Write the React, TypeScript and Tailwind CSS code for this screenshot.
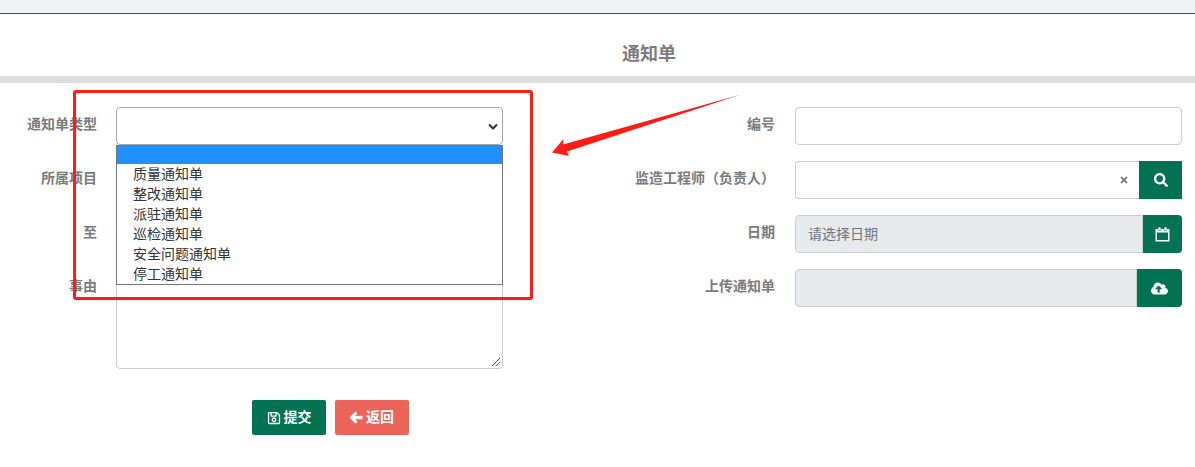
import React from 'react';
import { FaSearch, FaCloudUploadAlt, FaRegSave, FaTimes } from 'react-icons/fa';

const options = ['质量通知单', '整改通知单', '派驻通知单', '巡检通知单', '安全问题通知单', '停工通知单'];

const Label = ({ children, className = '' }: { children: React.ReactNode; className?: string }) => (
  <label className={`text-[14px] leading-[20px] font-bold text-[#7b7b7b] text-right shrink-0 pt-[7px] ${className}`}>{children}</label>
);

const inputCls = 'h-[38px] border border-[#ccc] rounded-[4px] bg-white flex-1 min-w-0';

const Row = ({ label, children, right }: { label: string; children: React.ReactNode; right?: boolean }) => (
  <div className="flex items-start">
    <Label className={right ? 'w-[251px]' : 'w-[97px]'}>{label}</Label>
    <div className={`flex flex-1 min-w-0 ${right ? 'ml-[20px]' : 'ml-[19px]'}`}>{children}</div>
  </div>
);

const CalendarIcon = () => (
  <svg width="15" height="15" viewBox="0 0 15 15" fill="none">
    <path d="M0.5 2H14.5V14.5H0.5Z M2 5.5V13H13V5.5Z" fill="white" fillRule="evenodd" />
    <rect x="3" y="0" width="3" height="3.5" rx="1" fill="white" stroke="#027352" strokeWidth="0.6" />
    <rect x="9" y="0" width="3" height="3.5" rx="1" fill="white" stroke="#027352" strokeWidth="0.6" />
  </svg>
);

const BackIcon = () => (
  <svg width="13" height="13" viewBox="0 0 13 13" fill="none">
    <path d="M6.5 1.5L1.5 6.5L6.5 11.5" stroke="white" strokeWidth="3" strokeLinejoin="miter" />
    <path d="M2.5 6.5H12.5" stroke="white" strokeWidth="3.4" />
  </svg>
);

export default function App() {
  return (
    <div className="relative w-[1195px] h-[467px] overflow-hidden bg-white font-['Liberation_Sans','Noto_Sans_CJK_SC',sans-serif]">
      <div className="h-[14px] bg-[#f0f3f4] border-b border-[#1f5f4c]" />

      <h1 className="h-[62px] pl-[103px] pt-[26px] text-center text-[18px] leading-[28px] font-bold text-[#7b7b7b]">通知单</h1>
      <div className="h-[7px] bg-[#dddddd]" />

      <div className="flex pt-[24px]">
        {/* 左栏 */}
        <div className="w-[503px] flex flex-col gap-[16px]">
          <Row label="通知单类型">
            <div className="relative h-[38px] flex-1 border border-[#a6a6a6] rounded-[4px] bg-white">
              <svg className="absolute right-[4px] top-[15px]" width="10" height="8" viewBox="0 0 10 8" fill="none">
                <path d="M1 1.5L5 5.5L9 1.5" stroke="#333" strokeWidth="2" />
              </svg>
            </div>
          </Row>
          <Row label="所属项目"><div className={inputCls} /></Row>
          <Row label="至"><div className={inputCls} /></Row>
          <Row label="事由">
            <div className="relative h-[100px] flex-1 border border-[#ccc] rounded-[4px] bg-white">
              <svg className="absolute right-[1px] bottom-[1px]" width="10" height="10" viewBox="0 0 10 10" fill="none">
                <path d="M1 9L9 1M5 9L9 5" stroke="#555" strokeWidth="1" />
              </svg>
            </div>
          </Row>
          <div className="flex gap-[9px] pl-[252px] mt-[15px]">
            <button className="h-[35px] w-[74px] rounded-[2px] bg-[#027352] text-white text-[14px] font-bold flex items-center justify-center gap-[3px]">
              <FaRegSave size={14} />提交
            </button>
            <button className="h-[35px] w-[74px] rounded-[2px] bg-[#ec6459] text-white text-[14px] font-bold flex items-center justify-center gap-[3px]">
              <BackIcon />返回
            </button>
          </div>
        </div>

        {/* 右栏 */}
        <div className="ml-[21px] w-[658px] flex flex-col gap-[16px]">
          <Row right label="编号"><div className={inputCls} /></Row>
          <Row right label="监造工程师（负责人）">
            <div className="h-[38px] flex-1 min-w-0 border border-[#ccc] border-r-0 rounded-l-[4px] bg-white flex items-center justify-end pr-[10px]">
              <FaTimes size={10} className="text-[#777]" />
            </div>
            <div className="h-[38px] w-[43px] bg-[#027352] text-white flex items-center justify-center"><FaSearch size={14} /></div>
          </Row>
          <Row right label="日期">
            <div className="h-[38px] flex-1 min-w-0 border border-[#ccc] rounded-l-[4px] bg-[#e7eaed] flex items-center pl-[12px] text-[14px] text-[#6c757d]">请选择日期</div>
            <div className="h-[38px] w-[39px] rounded-r-[4px] bg-[#027352] flex items-center justify-center"><CalendarIcon /></div>
          </Row>
          <Row right label="上传通知单">
            <div className="h-[38px] flex-1 min-w-0 border border-[#ccc] rounded-l-[4px] bg-[#e7eaed]" />
            <div className="h-[38px] w-[45px] rounded-r-[4px] bg-[#027352] text-white flex items-center justify-center"><FaCloudUploadAlt size={17} /></div>
          </Row>
        </div>
      </div>

      {/* 展开的下拉列表 */}
      <ul className="absolute left-[116px] top-[145px] w-[387px] h-[140px] border border-[#767676] bg-white text-[14px] leading-[20px] text-[#333]">
        <li className="h-[18px] bg-[#1e90ff]" />
        {options.map((o) => (
          <li key={o} className="h-[20px] pl-[16px]">{o}</li>
        ))}
      </ul>

      {/* 截图标注 */}
      <div className="absolute left-[73px] top-[90px] w-[460px] h-[210px] border-[3px] border-[#ff1c12] rounded-[3px]" />
      <svg className="absolute left-[545px] top-[90px]" width="200" height="70" viewBox="0 0 200 70">
        <path d="M196 4.5L18 54.5L18.5 49L7 62.5L24 66L22 61.5Z" fill="#ff1c12" />
      </svg>
    </div>
  );
}
